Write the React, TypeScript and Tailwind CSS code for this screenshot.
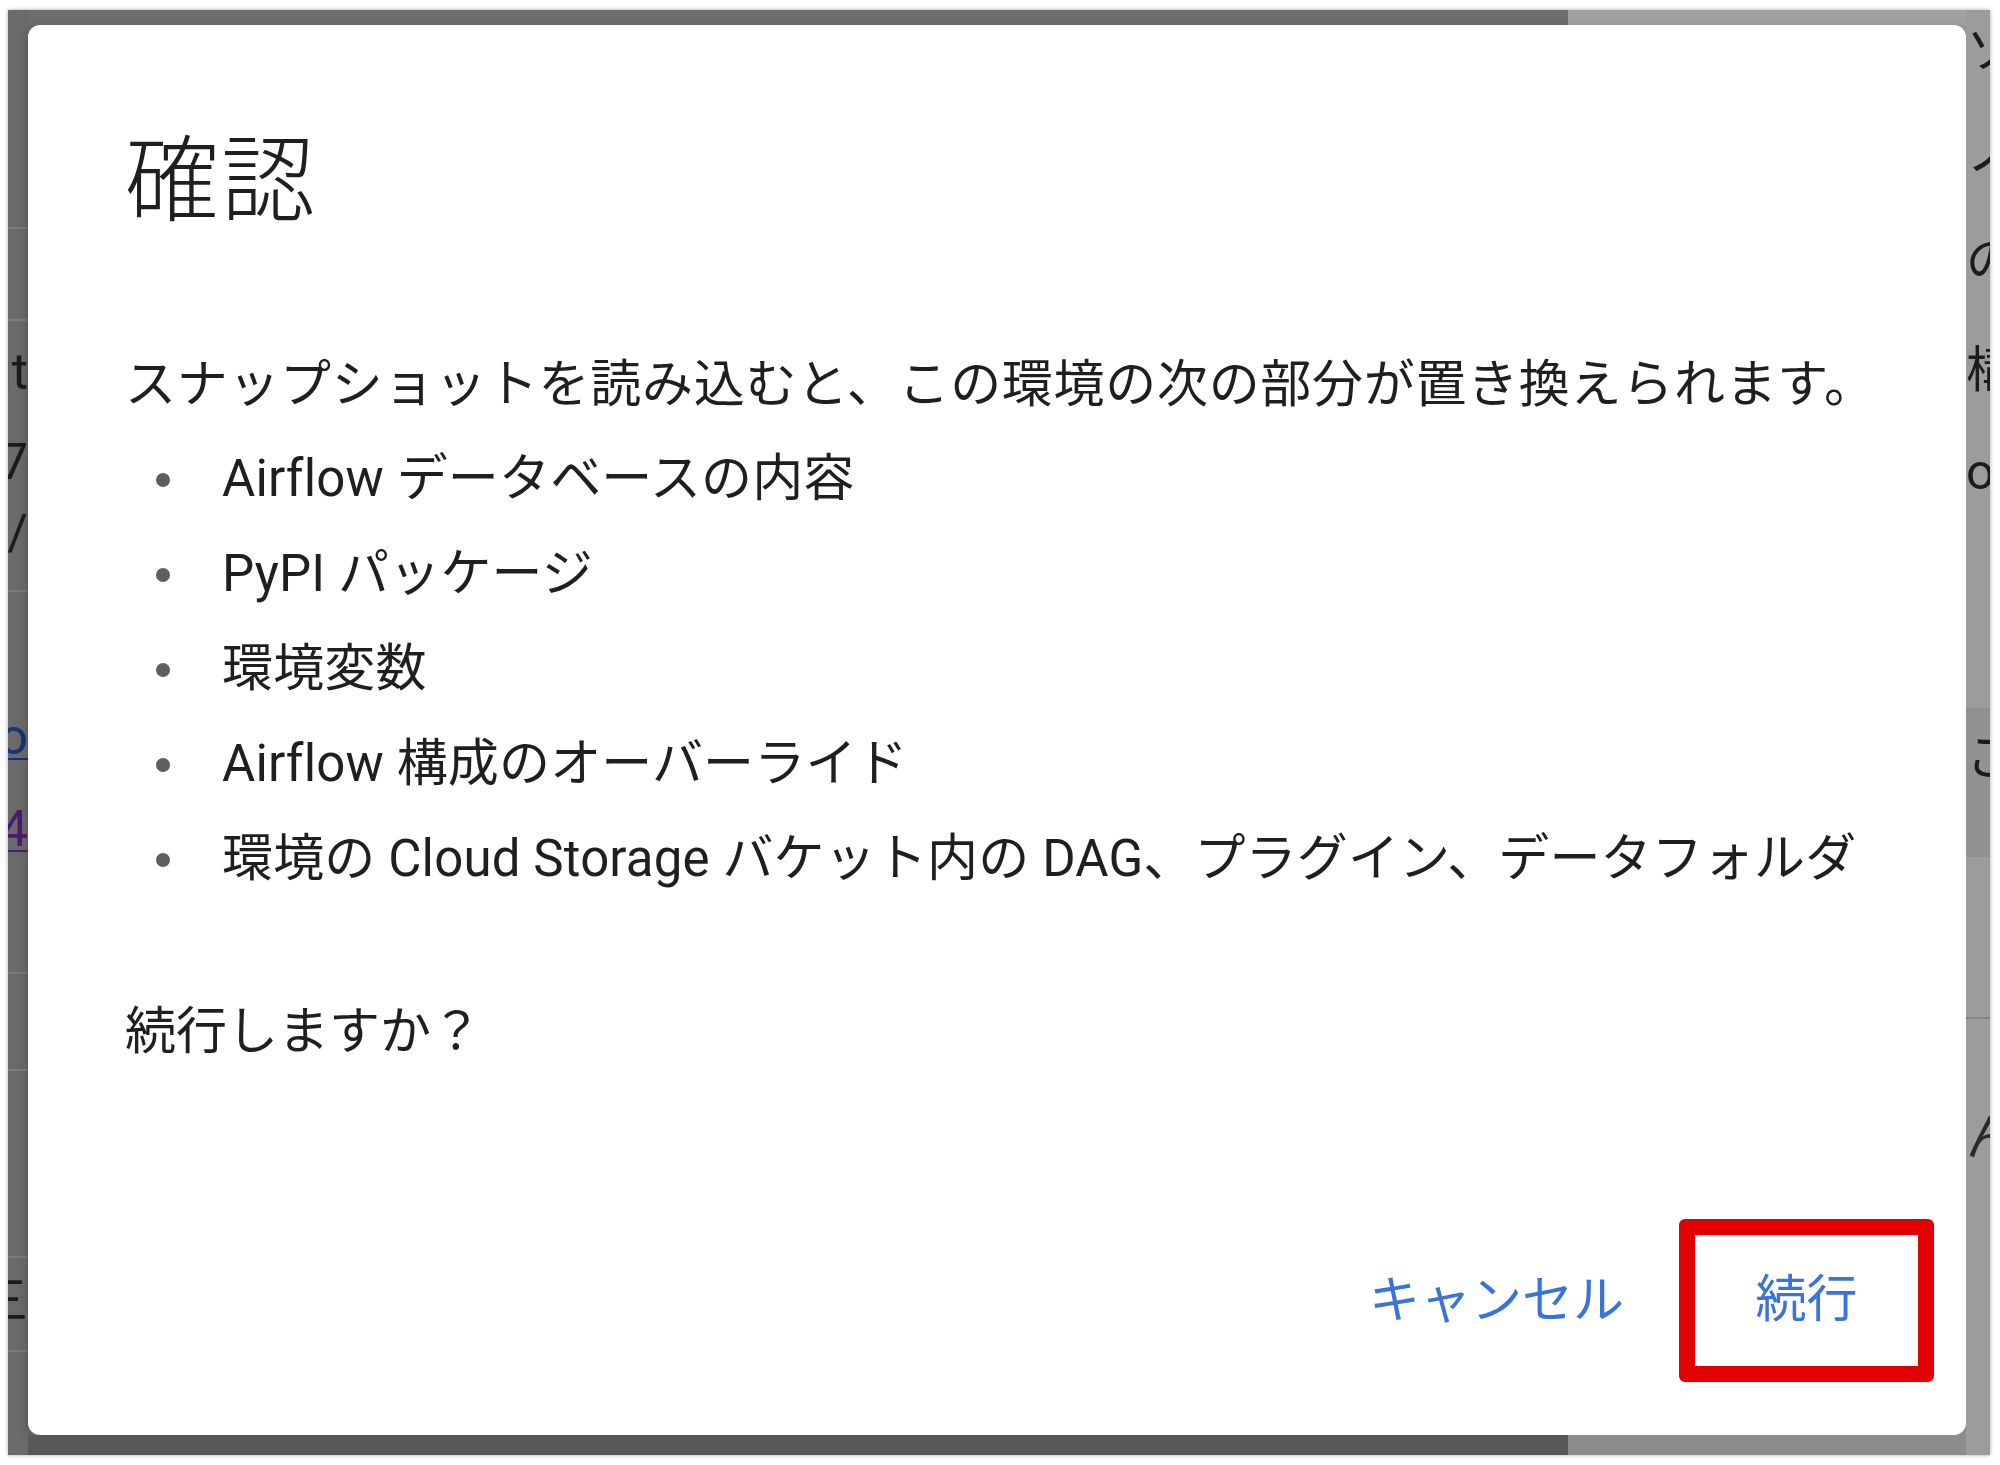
const font = "font-['Roboto','Noto_Sans_CJK_JP',sans-serif]";

type Frag = { gap: number; h: number; text?: string; tone?: string; line?: boolean; underline?: boolean };

const leftFrags: Frag[] = [
    { gap: 217, h: 2, line: true },
    { gap: 90, h: 2, line: true },
    { gap: 26, h: 50, text: "out" },
    { gap: 40, h: 50, text: "17" },
    { gap: 21, h: 50, text: "/ /" },
    { gap: 32, h: 2, line: true },
    { gap: 120, h: 50, text: "lo", tone: "text-[#17357a]", underline: true },
    { gap: 42, h: 50, text: "4", tone: "text-[#4b1c6e]", underline: true },
    { gap: 118, h: 2, line: true },
    { gap: 95, h: 2, line: true },
    { gap: 185, h: 2, line: true },
    { gap: 18, h: 50, text: "三" },
    { gap: 24, h: 2, line: true },
];

const rightFrags: Frag[] = [
    { gap: 16, h: 50, text: "ソ" },
    { gap: 52, h: 50, text: "ノ" },
    { gap: 58, h: 50, text: "の" },
    { gap: 59, h: 50, text: "構" },
    { gap: 52, h: 50, text: "on" },
];

function Strip({ frags, side }: { frags: Frag[]; side: "left" | "right" }) {
    return (
        <div className="flex flex-col">
            {frags.map((f, i) => (
                <div key={i} className="flex flex-col">
                    <div style={{ height: f.gap }} />
                    {f.line ? (
                        <div className="h-[2px] bg-[#7c7c7c]" />
                    ) : (
                        <div
                            className={`h-[50px] flex items-center overflow-hidden whitespace-nowrap text-[50px] leading-[50px] ${
                                side === "left" ? "justify-end" : "justify-start"
                            } ${f.tone ?? "text-[#1c1c1c]"} ${f.underline ? "underline decoration-2 underline-offset-4" : ""}`}
                        >
                            {f.text}
                        </div>
                    )}
                </div>
            ))}
        </div>
    );
}

const items = [
    "Airflow データベースの内容",
    "PyPI パッケージ",
    "環境変数",
    "Airflow 構成のオーバーライド",
    "環境の Cloud Storage バケット内の DAG、プラグイン、データフォルダ",
];

export default function App() {
    return (
        <div className={`w-[2000px] h-[1465px] bg-white pt-[10px] pl-[8px] ${font}`}>
            <div className="w-[1982px] h-[1445px] flex shadow-[0_0_4px_rgba(0,0,0,0.35)]">
                {/* backdrop, left edge */}
                <div className="w-[20px] bg-[#6b6b6b] overflow-hidden">
                    <Strip frags={leftFrags} side="left" />
                </div>

                <div className="flex-1 flex flex-col bg-[linear-gradient(to_right,#6b6b6b_50%,#9c9c9c_50%)]">
                    <div className="h-[15px] bg-[linear-gradient(to_right,#6e6e6e_1540px,#a2a2a2_1540px)]" />

                    {/* dialog */}
                    <div className="flex-1 bg-white rounded-[12px] flex flex-col pl-[97px] pr-[32px] pt-[102px] pb-[53px] text-[#1f1f1f] shadow-[0_4px_14px_rgba(0,0,0,0.25)]">
                        <h1 className="text-[94px] leading-[110px] font-light tracking-[2px]">確認</h1>

                        <p className="mt-[100px] text-[51px] leading-[95px] tracking-[0.7px] whitespace-nowrap">
                            スナップショットを読み込むと、この環境の次の部分が置き換えられます。
                        </p>

                        <ul className="flex flex-col">
                            {items.map((it) => (
                                <li key={it} className="flex items-center h-[95px] text-[51px] tracking-[0.15px] whitespace-nowrap">
                                    <span className="ml-[31px] w-[14px] h-[14px] rounded-full bg-[#5f5f5f] shrink-0" />
                                    <span className="ml-[52px]">{it}</span>
                                </li>
                            ))}
                        </ul>

                        <p className="mt-[77px] text-[51px] leading-[95px] whitespace-nowrap">続行しますか？</p>

                        <div className="flex-1" />

                        <div className="flex items-center justify-end text-[51px] text-[#3a74d9]">
                            <button className="px-[8px] h-[95px] leading-[95px] mr-[47px]">キャンセル</button>
                            <button className="w-[255px] h-[163px] border-[16px] border-[#e30000] rounded-[6px] flex items-center justify-center">
                                続行
                            </button>
                        </div>
                    </div>

                    <div className="h-[20px] bg-[linear-gradient(to_right,#585858_1540px,#8c8c8c_1540px)]" />
                </div>

                {/* backdrop, right edge */}
                <div className="w-[24px] bg-[#9c9c9c] overflow-hidden flex flex-col">
                    <Strip frags={rightFrags} side="right" />
                    <div className="h-[211px]" />
                    <div className="h-[149px] bg-[#919191] flex flex-col pt-[25px]">
                        <div className="h-[50px] flex items-center overflow-hidden whitespace-nowrap text-[50px] text-[#1c1c1c]">
                            こ (
                        </div>
                    </div>
                    <div className="h-[160px]" />
                    <div className="h-[2px] bg-[#858585]" />
                    <div className="h-[94px]" />
                    <div className="h-[50px] flex items-center overflow-hidden whitespace-nowrap text-[50px] text-[#2a2a2a]">
                        ん
                    </div>
                </div>
            </div>
        </div>
    );
}
